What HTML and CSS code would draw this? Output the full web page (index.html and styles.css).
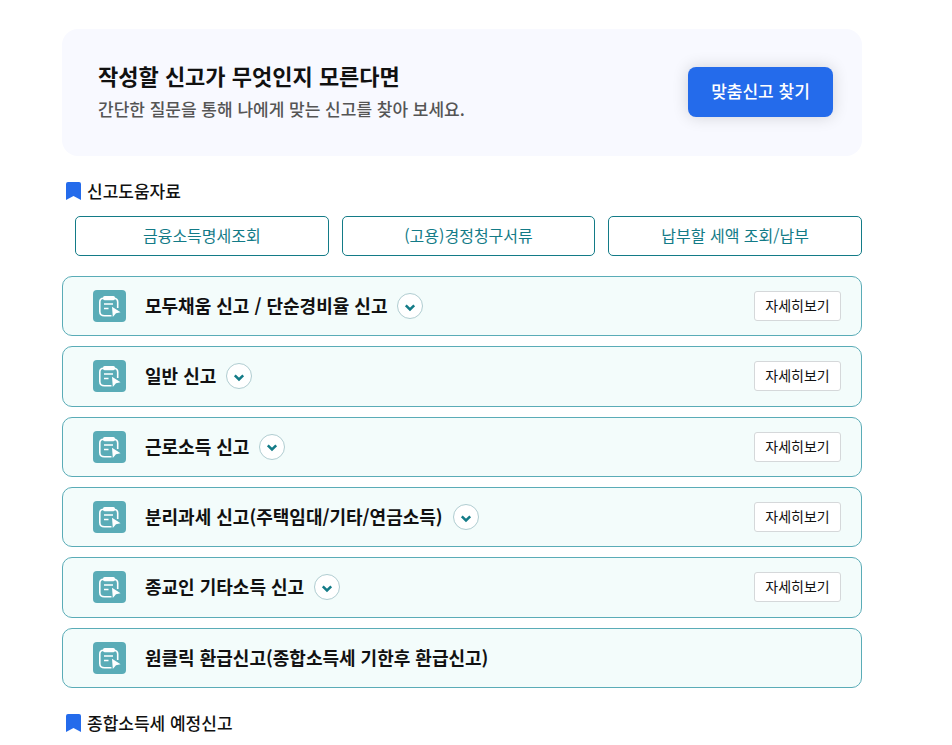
FILE: index.html
```html
<!DOCTYPE html>
<html lang="ko">
<head>
  <meta charset="UTF-8" />
  <meta name="viewport" content="width=device-width, initial-scale=1.0" />
  <title>종합소득세 신고</title>
  <link rel="stylesheet" href="styles.css">
</head>
<body>

  <!-- shared icons -->
  <svg class="icon-defs" aria-hidden="true">
    <symbol id="bookmark" viewBox="0 0 15 18">
      <path d="M2 0H13Q15 0 15 2V18L7.500 14L0 18V2Q0 0 2 0Z" fill="#246beb" />
    </symbol>
    <symbol id="report" viewBox="0 0 33 32">
      <rect width="33" height="32" rx="4" fill="#5aacb7" />
      <path d="M10.500 8.200Q6.800 8.200 6.800 12V21.500Q6.800 25.800 11.500 25.800H18.500M20.500 8.200Q24.700 8.200 24.700 12V18" fill="none" stroke="#fff" stroke-width="1.600" />
      <rect x="10" y="6" width="12" height="4.200" rx="1.600" fill="#fff" />
      <path d="M11 14H20M11 18.500H15.500" stroke="#fff" stroke-width="1.600" />
      <path d="M19 16.800L27.600 22.200L23 23.300L19.800 26.900Z" fill="#fff" />
    </symbol>
    <symbol id="chevron" viewBox="0 0 12 12">
      <path d="M1.800 4.300L6 8.500L10.200 4.300" fill="none" stroke="#137b87" stroke-width="2.500" />
    </symbol>
  </svg>

  <main class="container">
    <section class="guide">
      <div>
        <h2>작성할 신고가 무엇인지 모른다면</h2>
        <p>간단한 질문을 통해 나에게 맞는 신고를 찾아 보세요.</p>
      </div>
      <button type="button" class="find-btn">맞춤신고 찾기</button>
    </section>

    <h3 class="section-title"><svg><use href="#bookmark" /></svg>신고도움자료</h3>
    <div class="help-links">
      <button type="button">금융소득명세조회</button>
      <button type="button">(고용)경정청구서류</button>
      <button type="button">납부할 세액 조회/납부</button>
    </div>

    <ul class="report-list">
      <li class="report">
        <svg class="report-icon"><use href="#report" /></svg>
        <h4>모두채움 신고 / 단순경비율 신고</h4>
        <button type="button" class="toggle-btn" aria-label="펼치기"><svg><use href="#chevron" /></svg></button>
        <button type="button" class="detail-btn">자세히보기</button>
      </li>
      <li class="report">
        <svg class="report-icon"><use href="#report" /></svg>
        <h4>일반 신고</h4>
        <button type="button" class="toggle-btn" aria-label="펼치기"><svg><use href="#chevron" /></svg></button>
        <button type="button" class="detail-btn">자세히보기</button>
      </li>
      <li class="report">
        <svg class="report-icon"><use href="#report" /></svg>
        <h4>근로소득 신고</h4>
        <button type="button" class="toggle-btn" aria-label="펼치기"><svg><use href="#chevron" /></svg></button>
        <button type="button" class="detail-btn">자세히보기</button>
      </li>
      <li class="report">
        <svg class="report-icon"><use href="#report" /></svg>
        <h4>분리과세 신고(주택임대/기타/연금소득)</h4>
        <button type="button" class="toggle-btn" aria-label="펼치기"><svg><use href="#chevron" /></svg></button>
        <button type="button" class="detail-btn">자세히보기</button>
      </li>
      <li class="report">
        <svg class="report-icon"><use href="#report" /></svg>
        <h4>종교인 기타소득 신고</h4>
        <button type="button" class="toggle-btn" aria-label="펼치기"><svg><use href="#chevron" /></svg></button>
        <button type="button" class="detail-btn">자세히보기</button>
      </li>
      <li class="report">
        <svg class="report-icon"><use href="#report" /></svg>
        <h4>원클릭 환급신고(종합소득세 기한후 환급신고)</h4>
      </li>
    </ul>

    <h3 class="section-title"><svg><use href="#bookmark" /></svg>종합소득세 예정신고</h3>
  </main>

</body>
</html>
```
FILE: styles.css
```css
* {
  box-sizing: border-box;
}
body {
  margin: 0;
  background-color: #fff;
  color: #111;
  font-family: "Noto Sans CJK KR", sans-serif;
}
h2, h3, h4, p, ul {
  margin: 0;
  padding: 0;
}
button {
  font-family: inherit;
  padding: 0 0 2px;
  cursor: pointer;
}
.icon-defs {
  display: none;
}
.container {
  padding: 29px 90px 0 62px;
}
.guide {
  display: flex;
  justify-content: space-between;
  align-items: center;
  padding: 31px 29px 33px 36px;
  border-radius: 16px;
  background-color: #f8f9ff;
}
.guide h2 {
  margin-bottom: 4px;
  font-size: 22px;
  font-weight: 700;
  line-height: 30px;
}
.guide p {
  color: #555;
  font-size: 17px;
  font-weight: 500;
  line-height: 29px;
}
.find-btn {
  width: 145px;
  height: 50px;
  border: none;
  border-radius: 8px;
  background-color: #246beb;
  box-shadow: 0 0 16px rgba(0, 0, 0, 0.16);
  color: #fff;
  font-size: 17px;
  font-weight: 500;
}
.section-title {
  display: flex;
  align-items: center;
  gap: 6px;
  margin-top: 22px;
  padding-left: 4px;
  font-size: 17px;
  font-weight: 500;
  line-height: 26px;
}
.section-title svg {
  width: 15px;
  height: 18px;
}
.help-links {
  display: grid;
  grid-template-columns: repeat(3, 1fr);
  gap: 13px;
  margin: 12px 0 20px;
  padding-left: 13px;
}
.help-links button {
  height: 40px;
  border: 1px solid #137b87;
  border-radius: 5px;
  background-color: #fff;
  color: #137b87;
  font-size: 16px;
}
.report-list {
  display: grid;
  grid-auto-rows: 1fr;
  gap: 10px;
  min-height: 412px;
  list-style: none;
}
.report {
  display: flex;
  align-items: center;
  padding: 0 20px 0 30px;
  border: 1px solid #5aacb7;
  border-radius: 10px;
  background-color: #f3fcfb;
}
.report-icon {
  width: 33px;
  height: 32px;
  margin-right: 19px;
}
.report h4 {
  padding-bottom: 2px;
  font-size: 18px;
  font-weight: 700;
  line-height: 26px;
}
.toggle-btn {
  display: flex;
  align-items: center;
  justify-content: center;
  width: 26px;
  height: 26px;
  margin-left: 10px;
  padding: 1px 0 0;
  border: 1px solid #b0cdd1;
  border-radius: 50%;
  background-color: #fff;
}
.toggle-btn svg {
  width: 12px;
  height: 12px;
}
.detail-btn {
  width: 87px;
  height: 30px;
  margin-left: auto;
  border: 1px solid #d5d8da;
  border-radius: 3px;
  background-color: #fff;
  color: #111;
  font-size: 14px;
}
```
